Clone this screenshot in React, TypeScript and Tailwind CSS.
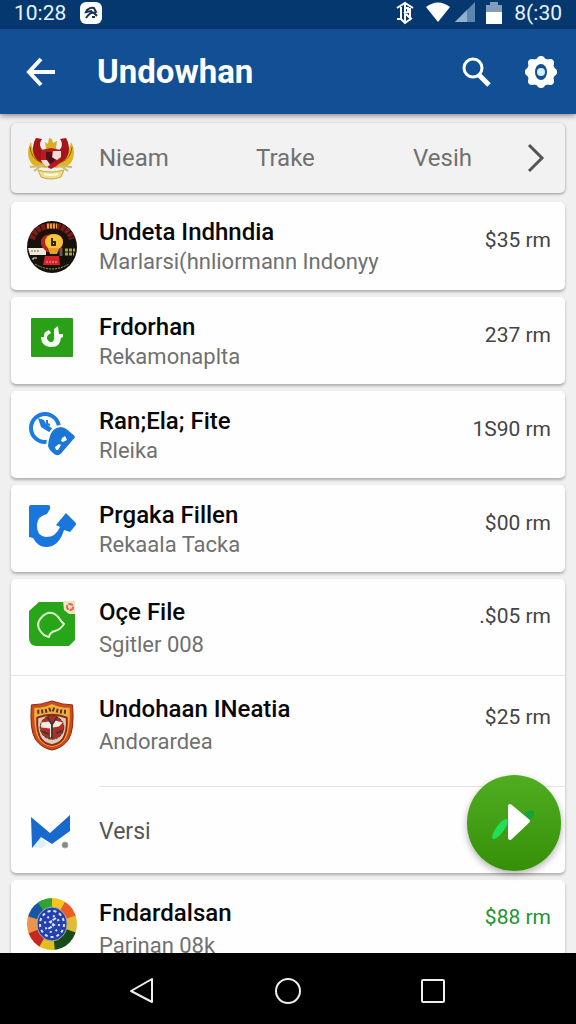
import type { ReactNode } from "react";

function GarudaIcon() {
  return (
    <svg viewBox="0 0 48 44" className="h-11 w-12">
      <path d="M4 6C-1 14 0 29 11 31l9 1-2-10C9 20 5 14 4 6zM44 6c5 8 4 23-7 25l-9 1 2-10c9-2 13-8 14-16z" fill="#dfb51f" />
      <path d="M9 2C3 13 6 24 17 28l6-9C13 15 11 8 15 3zM39 2c6 11 3 22-8 26l-6-9c10-4 12-11 8-16z" fill="#a51418" />
      <path d="M3 11q1 11 10 15M45 11q-1 11-10 15" stroke="#8d5c0c" strokeWidth="1" fill="none" />
      <path d="M19 13l-1-7 3 2 1-6 3 1 1 4 4-2-1 8z" fill="#d9ad2a" />
      <path d="M14 14l10-2 10 2v10q-2 6-10 9-8-3-10-9z" fill="#b41b22" />
      <path d="M26 15h8v6l-4 3-5-2zM14 24h6l3 5-3 2q-5-3-6-7z" fill="#f4ddd4" />
      <path d="M19 16h6v5l4 3-5 4-5-5z" fill="#4f1017" />
      <path d="M3 31l11-1-7 5M45 31l-11-1 7 5" stroke="#c8bd75" strokeWidth="2" fill="none" />
      <path d="M11 34q13 4 26 0l-3 7q-10 4-20 0z" fill="#e9df98" stroke="#c9ad29" />
      <path d="M17 38q7 2 14 0" stroke="#faf8df" strokeWidth="2" fill="none" />
    </svg>
  );
}

function DiscIcon() {
  return (
    <svg viewBox="0 0 50 52" className="h-13 w-[50px]">
      <ellipse cx="25" cy="26" rx="25" ry="26" fill="#17110d" />
      <path d="M5 18Q9 5 25 5t20 13" fill="none" stroke="#7c1b17" strokeWidth="6" strokeDasharray="4 1" />
      <path d="M20 5h10" stroke="#e4a42c" strokeWidth="5" strokeDasharray="2 1" />
      <path d="M14 19q2-6 12-6 10 0 10 8 0 7-5 10H20q-7-4-6-12z" fill="#b3261a" />
      <ellipse cx="27" cy="21" rx="9" ry="8" fill="#f4c63a" />
      <path d="M21 27h11l-2 6h-7z" fill="#e5a02c" />
      <path d="M25 17v7h3v-3h-3" stroke="#3a2614" strokeWidth="2" fill="none" />
      <path d="M1 27h15l3 3v4H3z" fill="#eee9d7" />
      <path d="M4 30h9" stroke="#66735d" strokeDasharray="2 1" />
      <path d="M38 29h10M38 33h9" stroke="#a4ad39" strokeWidth="3" strokeDasharray="3 1" />
      <path d="M34 27v8" stroke="#67594d" strokeWidth="3" />
      <path d="M18 35h14l1 9H16z" fill="#d22525" />
      <path d="M19 41h11" stroke="#f2a59b" strokeDasharray="2 1" />
      <path d="M8 43q17 10 34 0" fill="none" stroke="#9fa94a" strokeDasharray="2 1" />
      <path d="M6 39v-2h4" stroke="#eee" fill="none" />
    </svg>
  );
}

function GreenMarkIcon() {
  return (
    <svg viewBox="0 0 42 39" className="h-[39px] w-[42px]">
      <rect width="42" height="39" rx="1" fill="#29a017" />
      <path d="M18 12q-6 2-5 7h-3q0 9 9 10 10 1 11-9l2-1v-3h-4l-1-8-4 3v10q-1 4-4 3-5-3-2-7l3-2z" fill="#f4fff0" />
    </svg>
  );
}

function CompassTagIcon() {
  return (
    <svg viewBox="0 0 48 47" className="h-[47px] w-12">
      <circle cx="17" cy="18" r="14" fill="none" stroke="#1b7be0" strokeWidth="4" />
      <path d="M10 8l3 9 8 5 4-3-7-5-2-4z" fill="#1b7be0" />
      <path d="M19 10v4l3 1" fill="none" stroke="#1b7be0" strokeWidth="2" />
      <path d="M25 19q8-6 15 0l7 6q2 3-1 5L34 44q-4 4-8 1-6-4-7-9 1-12 6-17z" fill="#1b76d5" stroke="#fff" strokeWidth="2" />
      <path d="M34 28l3-2 2 4-4 2-2-1zM27 37l4-3 2 1-3 5h-2z" fill="#fff" />
    </svg>
  );
}

function CurvedArrowIcon() {
  return (
    <svg viewBox="0 0 48 44" className="h-11 w-12">
      <path d="M3 1h17q3 0 2 4-2 3-3 5-9 2-10 10-1 12 9 13 10 0 14-10l-4-2 10-12 3 3 6 6q2 2 0 4l-5 6-6-2q-5 17-18 17-8 0-13-9l-4-1V3q0-2 2-2z" fill="#1976dc" />
    </svg>
  );
}

function LeafTileIcon() {
  return (
    <svg viewBox="0 0 46 46" className="h-[46px] w-[46px]">
      <path d="M10 1h26q10 0 10 10v28l-6 6H7q-7-1-7-8V10z" fill="#29a51a" />
      <path d="M15 34Q5 25 12 17q5-6 11-5 5 1 9 8l3 3q-4 6-9 7-5 1-6 6l-3-1z" fill="none" stroke="#d9f5c8" strokeWidth="2" strokeLinejoin="round" />
      <path d="M34 0h12v13h-6l-5-4z" fill="#efe3c4" />
      <circle cx="41" cy="6" r="3" fill="none" stroke="#df684b" strokeWidth="2" strokeDasharray="5 1" />
    </svg>
  );
}

function ShieldIcon() {
  return (
    <svg viewBox="0 0 44 52" className="h-[51px] w-11">
      <path d="M1 5q10 0 21-4 11 4 21 4 2 25-4 35-6 9-17 11Q11 49 5 40-1 30 1 5z" fill="#d14919" stroke="#842713" />
      <path d="M4 8q10 0 18-4 8 4 18 4 1 22-4 31-4 7-14 9-10-2-14-9Q3 30 4 8z" fill="#eab13c" />
      <path d="M7 12q8 0 15-3 7 3 15 3" fill="none" stroke="#592d18" strokeWidth="4" strokeDasharray="2 2" />
      <path d="M7 18q15-6 30 0 1 14-4 22-4 5-11 6-7-1-11-6-5-8-4-22z" fill="#d9cfb4" stroke="#9b211c" strokeWidth="2" />
      <circle cx="22" cy="28" r="12" fill="#b62c24" stroke="#40352d" strokeDasharray="3 1" />
      <path d="M11 23l8-1 3 4 3-5 8 2-4 4-6 1v10h-3V29l-9-1z" fill="#f5eee0" />
      <path d="M17 17l5 8 5-8M22 24v15M12 32l7 3M33 31l-7 3" stroke="#433934" strokeWidth="2" fill="none" />
    </svg>
  );
}

function RibbonIcon() {
  return (
    <svg viewBox="0 0 40 36" className="h-9 w-10">
      <path d="M1 33l9-10 6 7-5 4z" fill="#dcf2fb" />
      <path d="M0 3l19 16L39 1v16L21 30 10 23 1 34z" fill="#1769ce" />
      <circle cx="34" cy="31" r="3" fill="#888" stroke="#aaa" />
    </svg>
  );
}

function WheelIcon() {
  return (
    <svg viewBox="0 0 50 53" className="h-[53px] w-[50px]">
      <clipPath id="wheel-edge"><ellipse cx="25" cy="26" rx="25" ry="26" /></clipPath>
      <g clipPath="url(#wheel-edge)">
        <path d="M25 26L0 19V0h14z" fill="#1856a5" />
        <path d="M25 26L8 0h17z" fill="#31a333" />
        <path d="M25 26V0h15z" fill="#f5c51d" />
        <path d="M25 26L40 0l10 18z" fill="#ed5c20" />
        <path d="M25 26l25-9v19z" fill="#dfbb38" />
        <path d="M25 26l25 9v18H27z" fill="#174c18" />
        <path d="M25 26l3 27H8z" fill="#e2be1d" />
        <path d="M25 26L10 53 0 35z" fill="#c62720" />
        <path d="M25 26L0 36V18z" fill="#ee9347" />
      </g>
      <ellipse cx="25" cy="26" rx="15" ry="17" fill="#243fae" stroke="#aab09b" />
      <g fill="none" stroke="#dce5ff" strokeWidth="2" strokeDasharray="3 3">
        <ellipse cx="25" cy="26" rx="12" ry="13" />
        <ellipse cx="25" cy="26" rx="7" ry="8" strokeDasharray="2 4" />
        <path d="M29 20l-6 4 4 3-6 4" strokeDasharray="4 1" />
      </g>
    </svg>
  );
}

function StatusBar() {
  return (
    <div className="flex h-[29px] shrink-0 items-center bg-[#063870] pr-[14px] pb-1 pl-[14px] text-[21px] leading-6 text-[#e8f4ff]">
      <span>10:28</span>
      <svg viewBox="0 0 22 22" className="ml-[14px] h-[22px] w-[22px]">
        <rect width="22" height="22" rx="6" fill="#fff" />
        <path d="M7 8q3-3 7-2l2 4q-3 2-5-1l-5 1zM6 16q4-6 8-5l3 3M12 15h3" fill="none" stroke="#173252" strokeWidth="2" />
      </svg>
      <svg viewBox="0 0 18 24" className="ml-auto h-6 w-[18px]" fill="none" stroke="#fff" strokeWidth="2">
        <path d="M1 7l8-5 8 5M1 18h4l4 4 7-5M5 6v12M9 2v20M9 7h3v4l-3 1 5 5V7" />
      </svg>
      <svg viewBox="0 0 26 21" className="ml-[11px] h-[21px] w-[26px]"><path d="M1 5q12-9 24 0L13 20z" fill="#fff" /></svg>
      <svg viewBox="0 0 20 21" className="ml-1 h-[21px] w-5"><path d="M0 20L20 0v20z" fill="#5c87b0" /><path d="M0 20L12 8v12z" fill="#91b1ce" /></svg>
      <svg viewBox="0 0 16 24" className="ml-[11px] h-6 w-4"><path d="M4 1h8v3h4v8H0V4h4z" fill="#829cb9" /><path d="M0 11h16v12H0z" fill="#fff" /></svg>
      <span className="ml-3">8(:30</span>
    </div>
  );
}

function AppBar() {
  return (
    <header className="relative z-10 flex h-[85px] shrink-0 items-center bg-[#134f94] pr-[18px] pl-[25px] text-white shadow-[0_2px_5px_rgba(0,0,0,0.4)]">
      <button type="button" aria-label="Back">
        <svg viewBox="0 0 32 32" className="h-8 w-8" fill="none" stroke="#fff" strokeWidth="4"><path d="M30 16H4M16 3L4 16l12 13" /></svg>
      </button>
      <h1 className="ml-10 flex-1 text-[33px] leading-10 font-bold">Undowhan</h1>
      <button type="button" aria-label="Search">
        <svg viewBox="0 0 32 32" className="h-8 w-8" fill="none" stroke="#fff"><circle cx="13" cy="12" r="9" strokeWidth="3" /><path d="M19 19l10 10" strokeWidth="5" /></svg>
      </button>
      <button type="button" aria-label="Settings" className="ml-8">
        <svg viewBox="0 0 34 34" className="h-[34px] w-[34px]">
          <g fill="#fff">
            <circle cx="17" cy="17" r="14" />
            <circle cx="17" cy="5" r="4" /><circle cx="26" cy="8" r="4" /><circle cx="29" cy="17" r="4" /><circle cx="26" cy="26" r="4" />
            <circle cx="17" cy="29" r="4" /><circle cx="8" cy="26" r="4" /><circle cx="5" cy="17" r="4" /><circle cx="8" cy="8" r="4" />
          </g>
          <ellipse cx="17" cy="17" rx="6" ry="8" fill="#134f94" />
          <circle cx="17" cy="17" r="4" fill="#d8edff" />
        </svg>
      </button>
    </header>
  );
}

type Item = { title: string; detail: string; amount: string; icon: ReactNode; size: string; roomy?: boolean; raised?: boolean; green?: boolean };

function ItemRow({ title, detail, amount, icon, size, roomy, raised, green }: Item) {
  return (
    <article className={`flex pr-[14px] ${size}`}>
      <div className="flex w-[88px] shrink-0 items-start justify-center pr-[7px]">{icon}</div>
      <div className="min-w-0 flex-1">
        <h2 className="text-[24px] leading-[30px] font-medium text-[#080808]">{title}</h2>
        <p className={`text-[22px] leading-[30px] whitespace-nowrap text-[#707070] ${roomy ? "mt-[3px]" : ""}`}>{detail}</p>
      </div>
      <span className={`text-[21px] leading-[30px] whitespace-nowrap ${raised ? "mt-1" : "mt-2"} ${green ? "text-[#219332]" : "text-[#444]"}`}>{amount}</span>
    </article>
  );
}

const card = "rounded-[5px] bg-[#fefefe] shadow-[0_2px_3px_rgba(0,0,0,0.28)]";

const files: Item[] = [
  { title: "Undeta Indhndia", detail: "Marlarsi(hnliormann Indonyy", amount: "$35 rm", icon: <div className="pt-1"><DiscIcon /></div>, size: "min-h-[88px] pt-[15px]" },
  { title: "Frdorhan", detail: "Rekamonaplta", amount: "237 rm", icon: <div className="pt-[6px]"><GreenMarkIcon /></div>, size: "min-h-[87px] pt-[15px]" },
  { title: "Ran;Ela; Fite", detail: "Rleika", amount: "1S90 rm", icon: <div className="pt-1"><CompassTagIcon /></div>, size: "min-h-[87px] pt-[15px]" },
  { title: "Prgaka Fillen", detail: "Rekaala Tacka", amount: "$00 rm", icon: <div className="pt-1"><CurvedArrowIcon /></div>, size: "min-h-[87px] pt-[15px]" },
];

export default function App() {
  return (
    <div className="flex h-screen flex-col overflow-hidden bg-[#f0f0f1] font-[Roboto,sans-serif]">
      <StatusBar />
      <AppBar />
      <main className="relative min-h-0 flex-1">
        <div className="flex h-full flex-col gap-[7px] overflow-hidden px-[11px] pt-[9px] *:shrink-0">
          <nav className="mb-[2px] flex h-[70px] items-center rounded-[5px] bg-[#f2f2f2] pr-[18px] text-[24px] text-[#707070] shadow-[0_1px_3px_rgba(0,0,0,0.4)]">
            <div className="flex w-[88px] justify-center pr-2"><GarudaIcon /></div>
            <div className="grid flex-1 grid-cols-[157px_157px_1fr]">
              <a href="#nieam">Nieam</a>
              <a href="#trake">Trake</a>
              <a href="#vesih">Vesih</a>
            </div>
            <button type="button" aria-label="More">
              <svg viewBox="0 0 24 32" className="h-8 w-6" fill="none" stroke="#555" strokeWidth="3"><path d="M6 3l13 13L6 29" /></svg>
            </button>
          </nav>
          {files.map((file) => (
            <section key={file.title} className={card}><ItemRow {...file} /></section>
          ))}
          <section className={card}>
            <div className="border-b border-[#e8e8e8]">
              <ItemRow title="Oçe File" detail="Sgitler 008" amount=".$05 rm" icon={<div className="pt-1"><LeafTileIcon /></div>} size="min-h-[96px] pt-[18px]" roomy raised />
            </div>
            <ItemRow title="Undohaan INeatia" detail="Andorardea" amount="$25 rm" icon={<div className="pt-[6px]"><ShieldIcon /></div>} size="min-h-[110px] pt-[18px]" roomy />
            <div className="flex h-[87px]">
              <div className="flex w-[88px] items-center justify-center pt-1 pr-2"><RibbonIcon /></div>
              <div className="flex flex-1 items-center border-t border-[#e5e5e5] pt-1 text-[23px] text-[#555]">Versi</div>
            </div>
          </section>
          <section className={card}>
            <ItemRow title="Fndardalsan" detail="Parinan 08k" amount="$88 rm" icon={<WheelIcon />} size="min-h-[96px] pt-[18px]" roomy raised green />
          </section>
        </div>
        <button type="button" aria-label="Start" className="absolute right-[15px] bottom-[82px] rounded-full bg-linear-to-b from-[#50ad20] to-[#359006] shadow-[0_3px_7px_rgba(0,0,0,0.3)]">
          <svg viewBox="0 0 94 96" className="h-24 w-[94px]">
            <ellipse cx="33" cy="54" rx="4" ry="12" transform="rotate(36 33 54)" fill="#20df58" />
            <ellipse cx="62" cy="40" rx="6" ry="4" transform="rotate(-30 62 40)" fill="#16a335" />
            <path d="M43 31l18 15-18 17z" fill="#fff" stroke="#fff" strokeWidth="4" strokeLinejoin="round" />
          </svg>
        </button>
      </main>
      <nav className="grid h-[71px] shrink-0 grid-cols-[1fr_145px_145px_145px_1fr] items-center bg-black pt-1">
        <button type="button" aria-label="Back" className="col-start-2 justify-self-center">
          <svg viewBox="0 0 28 28" className="h-7 w-7" fill="none" stroke="#eee" strokeWidth="2" strokeLinejoin="round"><path d="M23 2v23L2 14z" /></svg>
        </button>
        <button type="button" aria-label="Home" className="justify-self-center">
          <svg viewBox="0 0 28 28" className="h-7 w-7" fill="none" stroke="#eee" strokeWidth="2"><circle cx="14" cy="14" r="12" /></svg>
        </button>
        <button type="button" aria-label="Recent apps" className="justify-self-center">
          <svg viewBox="0 0 28 28" className="h-7 w-7" fill="none" stroke="#eee" strokeWidth="2"><rect x="3" y="3" width="22" height="22" rx="1" /></svg>
        </button>
      </nav>
    </div>
  );
}
